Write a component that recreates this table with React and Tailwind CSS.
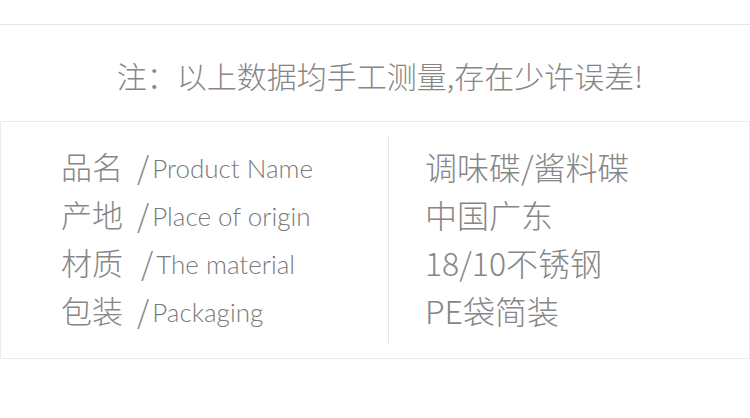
import React from 'react';

const cjk = "font-['Noto_Sans_CJK_SC','Noto_Sans',sans-serif]";
const latin = "font-['Lato','Noto_Sans_CJK_SC',sans-serif]";

const rows = [
    { label: '品名', en: 'Product Name', value: '调味碟/酱料碟', shift: '' },
    { label: '产地', en: 'Place of origin', value: '中国广东', shift: '' },
    { label: '材质', en: 'The material', value: '18/10不锈钢', shift: 'ml-[4px]' },
    { label: '包装', en: 'Packaging', value: 'PE袋简装', shift: '' },
];

export default function App() {
    return (
        <div className="w-[750px] h-[418px] bg-white overflow-hidden text-[#868686]">
            <div className="h-[24px]" />
            <div className="border-t border-[#e6e6e6]" />

            {/* Note */}
            <div className={`h-[96px] flex items-center justify-center pl-[10px] pt-[4px] text-[30px] font-light ${cjk}`}>
                注：以上数据均手工测量,存在少许误差!
            </div>

            {/* Spec table */}
            <div className="border border-[#ececec] h-[238px] flex py-[15px]">
                <div className="w-[388px] h-[206px] border-r border-[#e6e6e6] pt-[5px] pl-[60px]">
                    {rows.map((row) => (
                        <div key={row.label} className="h-[48px] flex items-center whitespace-nowrap">
                            <span className={`w-[76px] text-[31px] font-light ${cjk}`}>{row.label}</span>
                            <span className={`${row.shift} text-[31px] font-light ${cjk}`}>/</span>
                            <span className={`ml-[3px] mt-[4px] text-[26px] font-light text-[#7a7a7a] ${latin}`}>{row.en}</span>
                        </div>
                    ))}
                </div>
                <div className="flex-1 pt-[5px] pl-[36px]">
                    {rows.map((row) => (
                        <div key={row.label} className={`h-[48px] flex items-center whitespace-nowrap text-[32px] font-light ${cjk}`}>
                            {row.value}
                        </div>
                    ))}
                </div>
            </div>
        </div>
    );
}
